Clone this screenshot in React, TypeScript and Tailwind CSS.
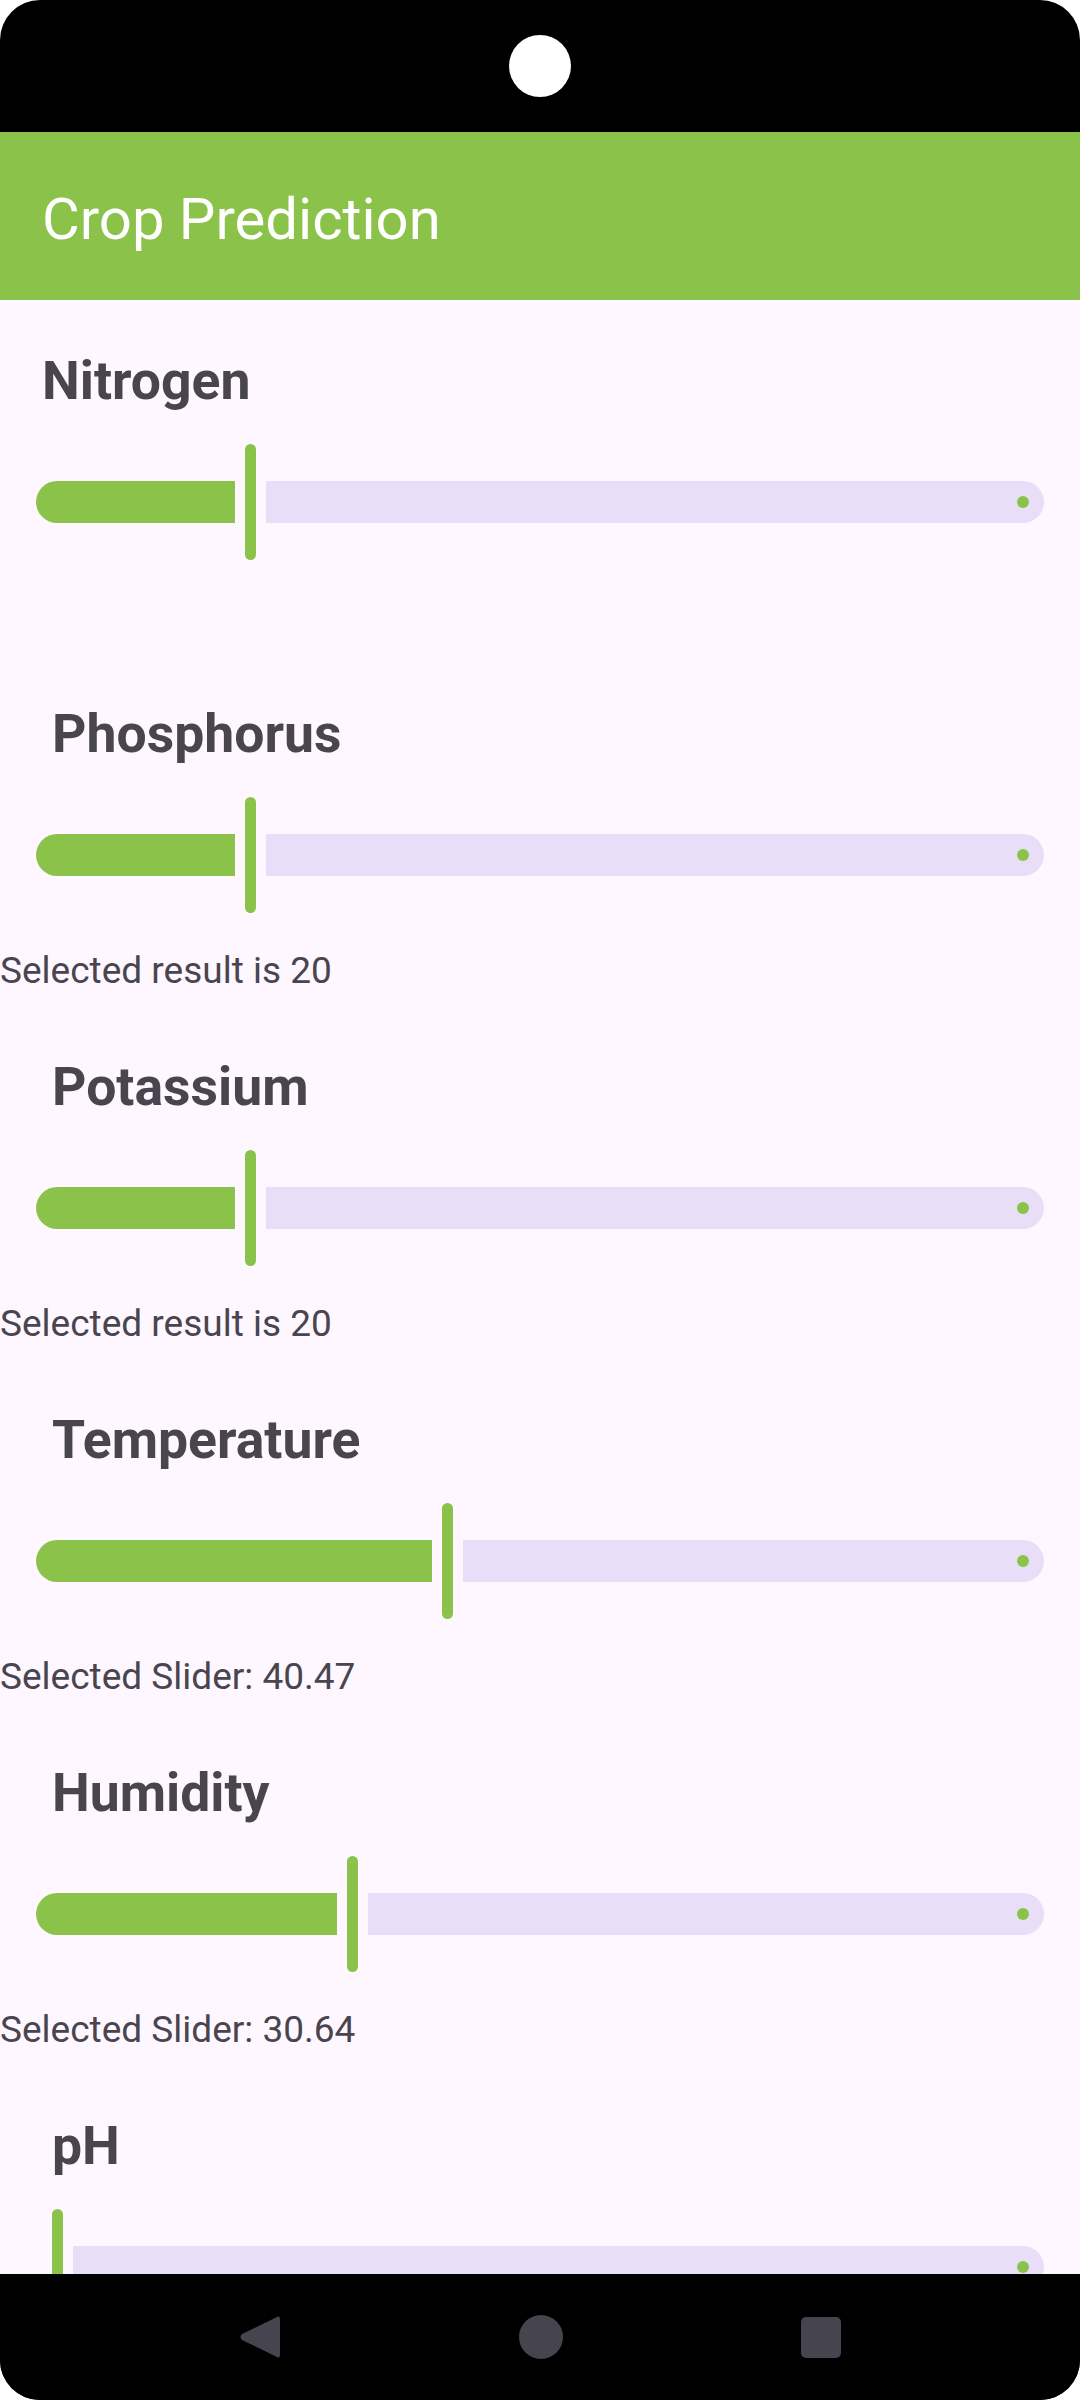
import React from "react";

const fields = [
  { name: "Nitrogen", value: 0.2, result: "", pad: "pl-[42px]" },
  { name: "Phosphorus", value: 0.2, result: "Selected result is 20", pad: "pl-[52px]" },
  { name: "Potassium", value: 0.2, result: "Selected result is 20", pad: "pl-[52px]" },
  { name: "Temperature", value: 0.4047, result: "Selected Slider: 40.47", pad: "pl-[52px]" },
  { name: "Humidity", value: 0.3064, result: "Selected Slider: 30.64", pad: "pl-[52px]" },
  { name: "pH", value: 0, result: "", pad: "pl-[52px]" },
];

function Slider({ value }: { value: number }) {
  // thumb centre runs from 57px to 1023px on the page
  const centre = 57 + value * 966;
  const activeWidth = centre - 51.5;
  const showActive = value > 0;

  return (
    <div className="flex h-[116px] items-center px-[36px]">
      {showActive && (
        <div
          className="h-[42px] shrink-0 rounded-l-full rounded-r-[5px] bg-[#8BC34A]"
          style={{ width: activeWidth }}
        />
      )}
      <div
        className="h-[116px] w-[11px] shrink-0 rounded-full bg-[#8BC34A]"
        style={{ marginLeft: showActive ? 10 : centre - 5.5 - 36 }}
      />
      <div className="ml-[10px] flex h-[42px] flex-1 items-center justify-end rounded-l-[5px] rounded-r-full bg-[#E8DEF8] pr-[15px]">
        <div className="h-[12px] w-[12px] rounded-full bg-[#8BC34A]" />
      </div>
    </div>
  );
}

export default function App() {
  return (
    <div className="h-[2400px] w-[1080px] bg-white" style={{ fontFamily: "Roboto, 'Noto Sans', sans-serif" }}>
      <div className="flex h-full w-full flex-col overflow-hidden rounded-[40px] bg-black">
        {/* Status bar */}
        <div className="flex h-[132px] shrink-0 items-start justify-center pt-[35px]">
          <div className="h-[62px] w-[62px] rounded-full bg-white" />
        </div>

        {/* App bar */}
        <div className="h-[168px] shrink-0 bg-[#8BC34A] pl-[42px] pt-[53px]">
          <h1 className="text-[58px] leading-[68px] font-normal text-white">Crop Prediction</h1>
        </div>

        {/* Content */}
        <div className="flex-1 overflow-hidden bg-[#FEF7FF] pt-[51px]">
          {fields.map((f) => (
            <div key={f.name} className="flex flex-col">
              <h2 className={`${f.pad} text-[53.5px] leading-[60px] font-bold text-[#49454F]`}>{f.name}</h2>
              <div className="mt-[33px]">
                <Slider value={f.value} />
              </div>
              <p className="mt-[36px] h-[44px] text-[37px] leading-[44px] text-[#49454F]">{f.result}</p>
              <div className="h-[64px]" />
            </div>
          ))}
        </div>

        {/* Navigation bar */}
        <div className="flex h-[126px] shrink-0 items-center justify-center bg-black">
          <div className="flex w-[602px] items-center justify-between">
            <svg width="42" height="46" viewBox="0 0 42 46">
              <path
                d="M38 3 Q41 1 41 6 L41 40 Q41 45 38 43 L3 26 Q0 23 3 20 Z"
                fill="#46444E"
              />
            </svg>
            <div className="h-[44px] w-[44px] rounded-full bg-[#46444E]" />
            <div className="h-[41px] w-[40px] rounded-[5px] bg-[#46444E]" />
          </div>
        </div>
      </div>
    </div>
  );
}
